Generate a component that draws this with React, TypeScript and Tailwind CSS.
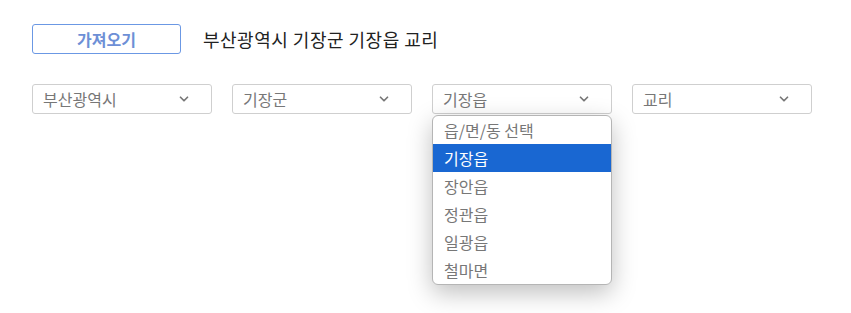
import { ChevronDown } from "lucide-react";

const selects = ["부산광역시", "기장군", "기장읍", "교리"];
const options = ["읍/면/동 선택", "기장읍", "장안읍", "정관읍", "일광읍", "철마면"];

function Select({ label, open }: { label: string; open?: boolean }) {
  return (
    <div className="relative w-[180px]">
      <div className="flex h-[30px] items-center justify-between rounded-[3px] border border-[#cfcfcf] bg-white pl-[10px] pr-[20px] text-[16px] leading-none text-[#777]">
        <span>{label}</span>
        <ChevronDown size={14} strokeWidth={3} className="text-[#777]" />
      </div>
      {open && (
        <div className="absolute left-0 top-[31px] z-10 w-[180px] overflow-hidden rounded-[6px] border border-[#b5b5b5] bg-white shadow-[0_8px_24px_rgba(0,0,0,0.25)]">
          {options.map((o, i) => (
            <div
              key={o}
              className={
                i === 1
                  ? "flex h-[28px] items-center bg-[#1967d2] px-[11px] text-[16px] leading-none text-white"
                  : "flex h-[28px] items-center px-[11px] text-[16px] leading-none text-[#777]"
              }
            >
              {o}
            </div>
          ))}
        </div>
      )}
    </div>
  );
}

export default function App() {
  return (
    <div className="min-h-screen w-full bg-white px-[32px] pt-[24px] font-['Noto_Sans_CJK_KR',sans-serif]">
      <div className="flex items-center">
        <button className="h-[30px] w-[149px] rounded-[3px] border border-[#6b98e4] text-[16px] font-bold leading-none text-[#6d8fd6]">
          가져오기
        </button>
        <span className="ml-[22px] text-[18px] leading-none tracking-[0.5px] text-[#222]">
          부산광역시 기장군 기장읍 교리
        </span>
      </div>
      <div className="mt-[30px] flex gap-[20px]">
        {selects.map((s, i) => (
          <Select key={s} label={s} open={i === 2} />
        ))}
      </div>
    </div>
  );
}
